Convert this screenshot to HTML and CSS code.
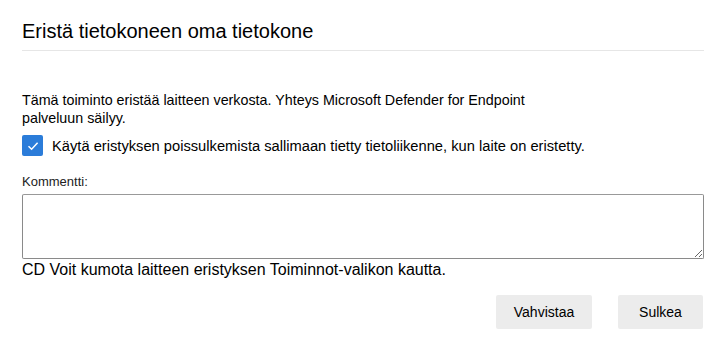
FILE: index.html
```html
<!DOCTYPE html>
<html>
<head>
    <title>Eristä tietokone</title>
    <link rel="stylesheet" href="styles.css">
</head>
<body>
    <div class="dialog">
        <h1 class="title">Eristä tietokoneen oma tietokone</h1>
        <div class="divider"></div>

        <p class="intro">Tämä toiminto eristää laitteen verkosta. Yhteys Microsoft Defender for Endpoint palveluun säilyy.</p>

        <label class="check-row">
            <span class="checkbox">
                <svg width="14" height="14" viewBox="0 0 14 14">
                    <path d="M2.5 7.2 L5.6 10.2 L11.6 3.8" fill="none" stroke="#fff" stroke-width="1.5"/>
                </svg>
            </span>
            <span class="check-text">Käytä eristyksen poissulkemista sallimaan tietty tietoliikenne, kun laite on eristetty.</span>
        </label>

        <div class="comment-label">Kommentti:</div>
        <textarea class="comment"></textarea>

        <div class="note">CD Voit kumota laitteen eristyksen Toiminnot-valikon kautta.</div>

        <div class="buttons">
            <button class="btn">Vahvistaa</button>
            <button class="btn">Sulkea</button>
        </div>
    </div>
</body>
</html>
```

FILE: styles.css
```css
body {
    margin: 0;
    background-color: #fff;
    font-family: "Liberation Sans", Arial, sans-serif;
    color: #000;
}

.dialog {
    padding: 18px 22px 0 22px;
    width: 682px;
}

.title {
    font-size: 20px;
    font-weight: normal;
    margin: 0;
    line-height: 26px;
}

.divider {
    height: 1px;
    background-color: #e6e6e6;
    margin-top: 6px;
}

.intro {
    font-size: 14.3px;
    line-height: 18px;
    margin: 40px 0 0 0;
    width: 540px;
}

.check-row {
    display: flex;
    align-items: center;
    gap: 9px;
    margin-top: 8px;
}

.checkbox {
    width: 21px;
    height: 21px;
    background-color: #2b7cd9;
    border-radius: 2px;
    display: flex;
    align-items: center;
    justify-content: center;
}

.check-text {
    font-size: 14.7px;
}

.comment-label {
    font-size: 13px;
    margin-top: 18px;
    color: #222;
}

.comment {
    display: block;
    box-sizing: border-box;
    width: 682px;
    height: 65px;
    margin-top: 5px;
    border: 1px solid #8a8a8a;
    border-top-color: #999;
    border-radius: 2px;
    resize: vertical;
}

.note {
    font-size: 16px;
    margin-top: 2px;
}

.buttons {
    display: flex;
    justify-content: flex-end;
    gap: 26px;
    margin-top: 16px;
    padding-right: 1px;
}

.btn {
    font-family: "Liberation Sans", Arial, sans-serif;
    font-size: 14px;
    color: #000;
    background-color: #ececec;
    border: none;
    border-radius: 2px;
    height: 34px;
    width: 96px;
}

.btn + .btn {
    width: 85px;
}
```
